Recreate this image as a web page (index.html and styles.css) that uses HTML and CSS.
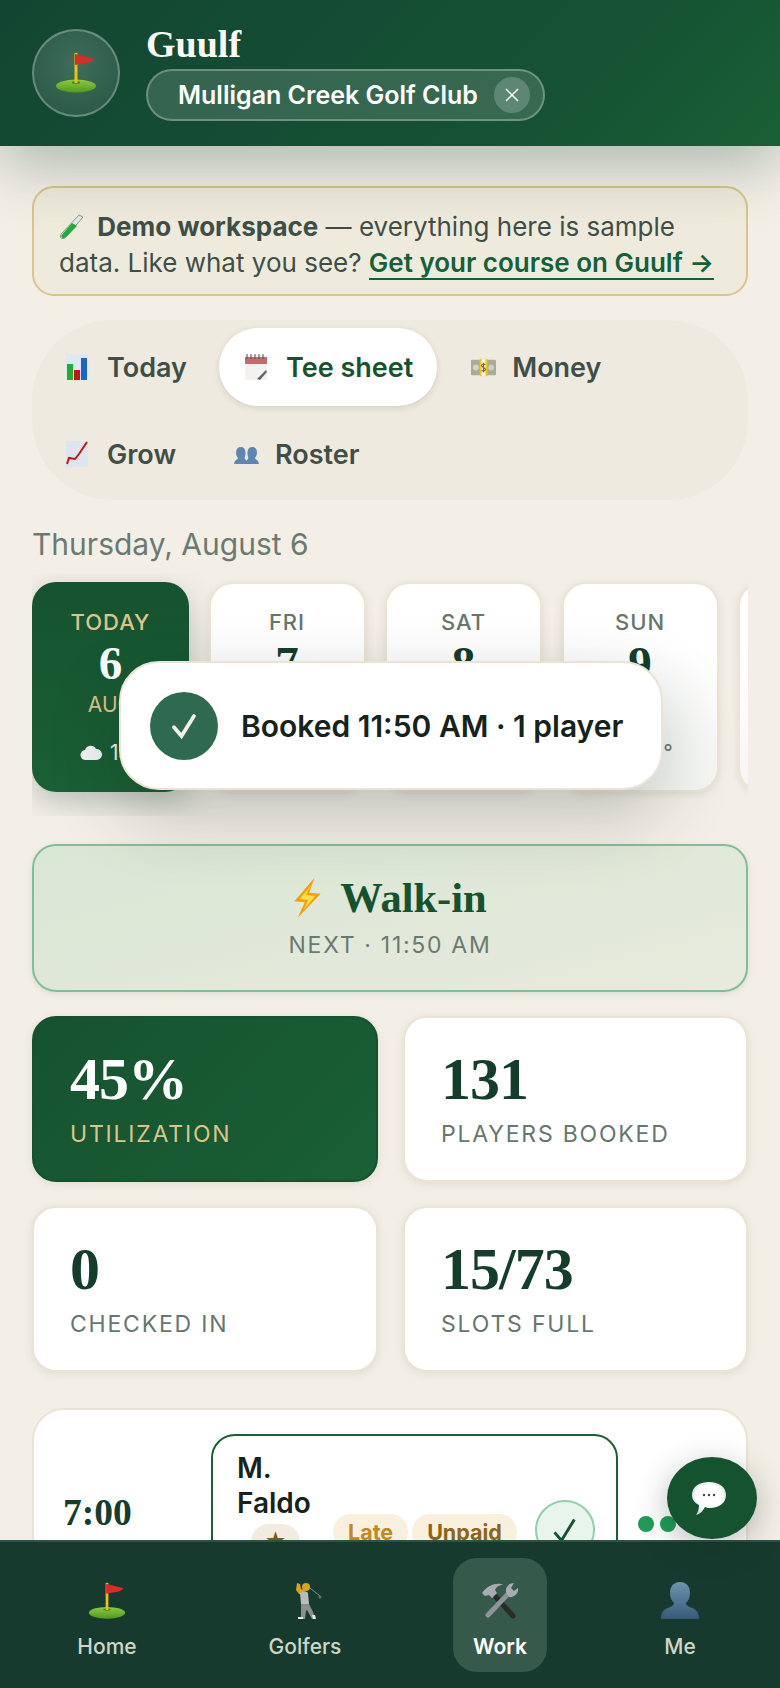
FILE: index.html
```html
<!DOCTYPE html>
<html lang="en">
  <head>
    <meta charset="UTF-8" />
    <meta name="viewport" content="width=device-width, initial-scale=1.0" />
    <title>Guulf</title>
    <link rel="stylesheet" href="styles.css">
  </head>
  <body>
    <svg class="defs" width="0" height="0">
      <defs>
        <linearGradient id="green-fill" x1="0" y1="0" x2="0" y2="1">
          <stop offset="0" stop-color="#8fcb3c" />
          <stop offset="1" stop-color="#4f9a1f" />
        </linearGradient>
        <linearGradient id="bust-fill" x1="0" y1="0" x2="0" y2="1">
          <stop offset="0" stop-color="#6d93ae" />
          <stop offset="1" stop-color="#375a78" />
        </linearGradient>
        <radialGradient id="bubble-fill" cx="0.5" cy="0.45" r="0.6">
          <stop offset="0.6" stop-color="#ffffff" />
          <stop offset="1" stop-color="#cfd2d2" />
        </radialGradient>
        <symbol id="flag" viewBox="0 0 42 42">
          <ellipse cx="21" cy="34" rx="20" ry="6.500" fill="url(#green-fill)" />
          <ellipse cx="21" cy="30.500" rx="4" ry="1.200" fill="#3d7a18" />
          <rect x="19.500" y="1" width="3" height="30" fill="#e8c315" />
          <path d="M20 2l19 5c-2 3-5 4-8 4l-11 2z" fill="#dc2a24" />
        </symbol>
        <symbol id="cloud" viewBox="0 0 22 16">
          <path d="M6 15a5 5 0 0 1-1-10 6 6 0 0 1 11-1 5.500 5.500 0 0 1 1 11z" fill="#f1f3f3" />
        </symbol>
      </defs>
    </svg>

    <header class="topbar">
      <div class="avatar">
        <svg class="avatar-icon"><use href="#flag" /></svg>
      </div>
      <div class="brand">
        <div class="brand-name">Guulf</div>
        <div class="club-chip">
          <span>Mulligan Creek Golf Club</span>
          <span class="chip-close">
            <svg viewBox="0 0 16 16" width="16" height="16"><path d="M2 2l12 12M14 2L2 14" stroke="#fff" stroke-width="1.500" fill="none" /></svg>
          </span>
        </div>
      </div>
    </header>

    <main class="content">
      <div class="demo-banner">
        <svg class="tube" viewBox="0 0 25 26"><path d="M20 2l4 2L7 24c-2 2-4 2-5 1s-1-3 1-5z" fill="#dfe9e4" stroke="#8a9a90" stroke-width="1" /><path d="M13 10l5 3L7 24c-2 1.500-3 1.500-4 .5s-1-2 .5-3.500z" fill="#1fae3a" /></svg>
        <b>Demo workspace</b> — everything here is sample data. Like what you see? <a class="demo-link">Get your course on Guulf →</a>
      </div>

      <nav class="tabs">
        <div class="tab">
          <svg class="tab-icon" viewBox="0 0 22 26"><rect width="22" height="26" fill="#dfe8f0" /><rect x="1" y="10" width="6" height="16" fill="#17b32e" /><rect x="8" y="16" width="6" height="10" fill="#c8140f" /><rect x="15" y="4" width="6" height="22" fill="#1a66c9" /></svg>
          Today
        </div>
        <div class="tab tab-active">
          <svg class="tab-icon" viewBox="0 0 22 26"><rect y="1" width="22" height="25" fill="#f3f2f0" /><rect y="3" width="22" height="7" fill="#c46a6a" /><path d="M2 0v5M6 0v5M10 0v5M14 0v5M18 0v5" stroke="#555" stroke-width="1" /><path d="M12 25l9-9 1 2-7 8z" fill="#666" /></svg>
          Tee sheet
        </div>
        <div class="tab">
          <svg class="tab-icon-wide" viewBox="0 0 26 18"><rect y="1" width="26" height="16" rx="1" fill="#a9ab98" /><circle cx="5" cy="9" r="3" fill="#d5d6c6" /><circle cx="21" cy="9" r="3" fill="#bcd6ba" /><rect x="9" width="8" height="18" fill="#f4c51f" /><rect x="11" width="4" height="18" fill="#fdf6d8" /><path d="M15 6c-1-1-4-1-4 1s4 2 4 4-3 2-4 1M13 4v10" stroke="#8a6412" stroke-width="1.200" fill="none" /></svg>
          Money
        </div>
        <div class="tab">
          <svg class="tab-icon" viewBox="0 0 22 26"><rect width="22" height="26" fill="#dde6ee" /><path d="M1 23l2-6 6 1 4-5 8-12" stroke="#c8140f" stroke-width="2" fill="none" /></svg>
          Grow
        </div>
        <div class="tab">
          <svg class="tab-icon-wide" viewBox="0 0 26 20"><g fill="#5d86b0"><path d="M19 2c3 0 5 2 5 6s-2 5-2 6 4 2 4 6H12c0-4 3-5 3-6s-1-2-1-6 2-6 5-6z" /><path d="M7 2c3 0 5 2 5 6s-1 5-1 6 3 2 3 6H0c0-4 4-5 4-6S2 12 2 8s2-6 5-6z" /></g></svg>
          Roster
        </div>
      </nav>

      <p class="date-label">Thursday, August 6</p>

      <div class="day-strip">
        <div class="day day-today">
          <div class="day-name">TODAY</div>
          <div class="day-num">6</div>
          <div class="day-month">AUG</div>
          <div class="day-temp"><svg class="cloud"><use href="#cloud" /></svg> 19°</div>
        </div>
        <div class="day">
          <div class="day-name">FRI</div>
          <div class="day-num">7</div>
          <div class="day-month">AUG</div>
          <div class="day-temp"><svg class="cloud"><use href="#cloud" /></svg> 21°</div>
        </div>
        <div class="day">
          <div class="day-name">SAT</div>
          <div class="day-num">8</div>
          <div class="day-month">AUG</div>
          <div class="day-temp"><svg class="cloud"><use href="#cloud" /></svg> 22°</div>
        </div>
        <div class="day">
          <div class="day-name">SUN</div>
          <div class="day-num">9</div>
          <div class="day-month">AUG</div>
          <div class="day-temp"><svg class="cloud"><use href="#cloud" /></svg> 20°</div>
        </div>
        <div class="day"></div>
      </div>

      <button class="walkin">
        <span class="walkin-title">
          <svg class="bolt" viewBox="0 0 26 38"><path d="M20 0L1 22l10 1-7 15L26 15l-11-1z" fill="#f59e0b" /><path d="M17 7L6 20l8 1-4 9 11-13-9-1z" fill="#fde047" /></svg>
          Walk-in
        </span>
        <span class="walkin-next">NEXT · 11:50 AM</span>
      </button>

      <div class="stats">
        <div class="stat stat-dark">
          <div class="stat-value">45%</div>
          <div class="stat-label">UTILIZATION</div>
        </div>
        <div class="stat">
          <div class="stat-value">131</div>
          <div class="stat-label">PLAYERS BOOKED</div>
        </div>
        <div class="stat">
          <div class="stat-value">0</div>
          <div class="stat-label">CHECKED IN</div>
        </div>
        <div class="stat">
          <div class="stat-value">15/73</div>
          <div class="stat-label">SLOTS FULL</div>
        </div>
      </div>

      <section class="tee-row">
        <div class="tee-time">7:00</div>
        <div class="booking">
          <div class="booking-who">
            <div class="booking-name">M.<br />Faldo</div>
            <span class="tag tag-star">★</span>
          </div>
          <div class="booking-tags">
            <span class="tag tag-late">Late</span>
            <span class="tag tag-unpaid">Unpaid</span>
            <span class="check-btn">
              <svg viewBox="0 0 24 24" width="28" height="28"><path d="M3 14l6 7L20 3" stroke="#14532d" stroke-width="2.500" fill="none" /></svg>
            </span>
          </div>
        </div>
        <div class="seats">
          <i></i><i></i>
        </div>
      </section>
    </main>

    <div class="toast">
      <span class="toast-check">
        <svg viewBox="0 0 24 24" width="30" height="30"><path d="M4 13l6 7L20 4" stroke="#f5f0e4" stroke-width="3" fill="none" stroke-linecap="round" /></svg>
      </span>
      Booked 11:50 AM · 1 player
    </div>

    <button class="chat-fab">
      <svg viewBox="0 0 34 33" width="34" height="33"><path d="M17 0c10 0 17 5 17 13s-7 13-16 13c-2 0-3 0-5-1-2 4-5 7-9 8 2-3 3-6 3-10C3 21 0 18 0 13 0 5 7 0 17 0z" fill="url(#bubble-fill)" /><circle cx="12" cy="13" r="1.200" fill="#444" /><circle cx="17" cy="13" r="1.200" fill="#444" /><circle cx="22" cy="13" r="1.200" fill="#444" /></svg>
    </button>

    <nav class="bottom-nav">
      <a class="nav-item">
        <svg class="nav-icon"><use href="#flag" /></svg>
        Home
      </a>
      <a class="nav-item">
        <svg class="nav-icon" viewBox="0 0 38 38"><path d="M24 6l10 8" stroke="#8b8f8d" stroke-width="1" /><circle cx="34" cy="15" r="1.500" fill="#6f7371" /><path d="M11 1l3 1 1 5 4 1-1 5-5-1-3-4z" fill="#d9a514" /><circle cx="20" cy="5" r="4" fill="#d9a514" /><path d="M14 11c3-2 7-2 8 0l1 11h-8z" fill="#b8bcba" /><path d="M15 22h8l4 8 2 6-3 1-5-9-1 1-1 8h-4z" fill="#8b8f8d" /><path d="M12 35h5v2h-5zM26 33l3 0 1 4h-3z" fill="#e6e8e6" /></svg>
        Golfers
      </a>
      <a class="nav-item nav-active">
        <svg class="nav-icon" viewBox="0 0 38 38"><path d="M15 15l17 19" stroke="#2a2a2a" stroke-width="5" stroke-linecap="round" /><path d="M1 11C7 2 18 0 22 3c-4 0-7 2-8 5l2 3-5 5-3-3-4 1z" fill="#a9adb3" /><path d="M28 11L7 33" stroke="#8f9399" stroke-width="5" stroke-linecap="round" /><path d="M25 10c-1-5 3-9 8-9l-3 5 3 3 4-3c1 6-5 10-9 9z" fill="#a9adb3" /></svg>
        Work
      </a>
      <a class="nav-item">
        <svg class="nav-icon" viewBox="0 0 38 38"><path d="M19 0c7 0 10 5 10 11 0 5-2 8-4 10 0 2 3 4 6 5 5 2 7 5 7 11H0c0-6 2-9 7-11 3-1 6-3 6-5-2-2-4-5-4-10C9 5 12 0 19 0z" fill="url(#bust-fill)" /></svg>
        Me
      </a>
    </nav>
  </body>
</html>
```

FILE: styles.css
```css
* {
  box-sizing: border-box;
}
html,
body {
  margin: 0;
  height: 1688px;
  overflow: hidden;
}
body {
  position: relative;
  font-family: Inter, "Noto Sans", sans-serif;
  background-color: #f3efe7;
  color: #14231c;
}
.defs {
  position: absolute;
}

/* top bar */
.topbar {
  position: relative;
  z-index: 5;
  display: flex;
  align-items: center;
  gap: 26px;
  height: 146px;
  padding: 0 32px 1px;
  background: linear-gradient(135deg, #134632 0%, #155234 70%, #1a5f35 100%);
  box-shadow: 0 20px 60px rgba(20, 60, 45, 0.3);
}
.avatar {
  display: flex;
  align-items: center;
  justify-content: center;
  width: 88px;
  height: 88px;
  margin-top: 1px;
  border-radius: 50%;
  background: radial-gradient(circle at 50% 40%, #3f6d5b, #275543);
  border: 2px solid rgba(255, 255, 255, 0.28);
}
.avatar-icon {
  width: 42px;
  height: 42px;
}
.brand {
  display: flex;
  flex-direction: column;
  gap: 5px;
}
.brand-name {
  font-family: "Liberation Serif", serif;
  font-size: 38px;
  font-weight: 700;
  line-height: 40px;
  color: #fdfbf4;
}
.club-chip {
  display: flex;
  align-items: center;
  gap: 16px;
  height: 52px;
  padding: 0 13px 0 30px;
  border-radius: 26px;
  background: rgba(255, 255, 255, 0.14);
  border: 2px solid rgba(255, 255, 255, 0.28);
  color: #fff;
  font-size: 25px;
  font-weight: 600;
}
.chip-close {
  display: flex;
  align-items: center;
  justify-content: center;
  width: 36px;
  height: 36px;
  border-radius: 50%;
  background: rgba(255, 255, 255, 0.2);
}

/* page body */
.content {
  padding: 40px 32px 0;
}
.demo-banner {
  padding: 21px 25px 13px;
  border: 2px solid #d8c48c;
  border-radius: 22px;
  background: #efebdc;
  color: #3f4f47;
  font-size: 26px;
  line-height: 36px;
}
.demo-banner b {
  font-weight: 700;
  margin-left: 6px;
}
.tube {
  width: 25px;
  height: 26px;
  vertical-align: -3px;
}
.demo-link {
  color: #14603a;
  font-weight: 600;
  border-bottom: 2px solid #14603a;
}
.tabs {
  display: flex;
  flex-wrap: wrap;
  align-content: flex-start;
  column-gap: 8px;
  row-gap: 9px;
  margin-top: 24px;
  padding: 8px;
  height: 180px;
  border-radius: 80px;
  background: #efeae0;
}
.tab {
  display: flex;
  align-items: center;
  gap: 19px;
  height: 78px;
  padding: 0 24px 0 26px;
  border-radius: 39px;
  font-size: 27px;
  font-weight: 600;
  color: #3f4f47;
}
.tab-active {
  background: #fff;
  color: #14532d;
  box-shadow: 0 2px 6px rgba(60, 50, 30, 0.14);
}
.tab-icon {
  width: 22px;
  height: 26px;
}
.tab-icon-wide {
  width: 25px;
  height: 19px;
  margin-right: -3px;
}
.date-label {
  margin: 26px 0 0;
  font-size: 30px;
  line-height: 36px;
  color: #6b7a70;
}

/* day picker */
.day-strip {
  display: flex;
  gap: 19.500px;
  align-items: flex-start;
  height: 242px;
  margin-top: 12px;
  padding-top: 8px;
  overflow: hidden;
}
.day {
  flex: 0 0 157px;
  height: 210px;
  padding-top: 24px;
  text-align: center;
  background: linear-gradient(180deg, #fff 30%, #f5f6f4);
  border: 2px solid #ebe4d6;
  border-radius: 24px;
  box-shadow: 0 2px 8px rgba(60, 50, 30, 0.1);
}
.day-today {
  background: linear-gradient(180deg, #15532f, #1a5f35);
  border: none;
  box-shadow: 0 10px 30px rgba(20, 60, 45, 0.25);
  padding-top: 26px;
}
.day-name {
  font-size: 22px;
  font-weight: 500;
  line-height: 28px;
  letter-spacing: 1px;
  color: #66776d;
}
.day-today .day-name {
  color: #dcc48a;
}
.day-num {
  font-family: "Liberation Serif", serif;
  font-size: 47px;
  font-weight: 700;
  line-height: 50px;
  margin-top: 2px;
  color: #143d2b;
}
.day-today .day-num {
  color: #fff;
}
.day-month {
  font-size: 21px;
  line-height: 28px;
  margin-top: 3px;
  color: #66776d;
}
.day-today .day-month {
  color: #dcc48a;
}
.day-temp {
  display: flex;
  align-items: center;
  justify-content: center;
  gap: 8px;
  margin-top: 21px;
  font-size: 21px;
  color: #66776d;
}
.day-today .day-temp {
  color: #f3efe7;
}
.cloud {
  width: 22px;
  height: 16px;
}

/* walk-in button */
.walkin {
  display: flex;
  flex-direction: column;
  align-items: center;
  width: 716px;
  height: 148px;
  margin-top: 28px;
  padding: 28px 0 0;
  border: 2px solid #7fbf97;
  border-radius: 24px;
  background: linear-gradient(165deg, #d9e7d5, #e7eadc);
  box-shadow: 0 2px 6px rgba(60, 50, 30, 0.1);
  font-family: inherit;
}
.walkin-title {
  display: flex;
  align-items: center;
  gap: 19px;
  font-family: "Liberation Serif", serif;
  font-size: 42.500px;
  font-weight: 700;
  line-height: 48px;
  color: #14532d;
}
.bolt {
  width: 28px;
  height: 40px;
}
.walkin-next {
  margin-top: 8px;
  font-size: 23px;
  line-height: 30px;
  letter-spacing: 1.700px;
  color: #6b7a70;
}

/* stat cards */
.stats {
  display: grid;
  grid-template-columns: 346px 345px;
  gap: 24px 25px;
  margin-top: 24px;
}
.stat {
  height: 166px;
  padding: 28px 36px 0;
  background: #fff;
  border: 2px solid #ebe4d6;
  border-radius: 24px;
  box-shadow: 0 2px 8px rgba(60, 50, 30, 0.1);
}
.stat-dark {
  background: linear-gradient(135deg, #15532f, #1a5f35);
  border-color: #14532d;
}
.stat-value {
  font-family: "Liberation Serif", serif;
  font-size: 60px;
  font-weight: 700;
  line-height: 66px;
  letter-spacing: -1px;
  color: #143d2b;
}
.stat-dark .stat-value {
  color: #fff;
}
.stat-label {
  margin-top: 7px;
  font-size: 23px;
  line-height: 30px;
  letter-spacing: 1.800px;
  color: #66776d;
}
.stat-dark .stat-label {
  color: #dcc48a;
}

/* first tee sheet row */
.tee-row {
  display: flex;
  align-items: flex-start;
  width: 716px;
  height: 360px;
  margin-top: 36px;
  padding: 24px 0 0 29px;
  background: #fff;
  border: 2px solid #ebe4d6;
  border-radius: 32px;
}
.tee-time {
  width: 148px;
  margin-top: 57px;
  font-family: "Liberation Serif", serif;
  font-size: 37.500px;
  font-weight: 700;
  color: #143d2b;
}
.booking {
  display: flex;
  width: 407px;
  height: 260px;
  padding: 15px 24px;
  border: 2px solid #1a5f35;
  border-radius: 24px;
}
.booking-who {
  flex: 0 0 96px;
}
.booking-name {
  font-size: 28px;
  font-weight: 600;
  line-height: 35px;
}
.booking-tags {
  display: flex;
  align-items: flex-start;
  gap: 4px;
  margin-top: 63px;
}
.tag {
  display: inline-block;
  height: 36px;
  padding: 5px 15px;
  border-radius: 18px;
  font-size: 21.500px;
  font-weight: 700;
  line-height: 26px;
}
.tag-star {
  width: 49px;
  margin: 3px 0 0 14px;
  padding: 4px 0;
  background: #f1ecdf;
  color: #7a5a1c;
  text-align: center;
}
.tag-late {
  background: #f8efdc;
  color: #c4861d;
}
.tag-unpaid {
  background: #f8efdc;
  color: #8a6418;
}
.check-btn {
  display: flex;
  align-items: center;
  justify-content: center;
  flex: 0 0 60px;
  height: 60px;
  margin: -14px 0 0 14px;
  border-radius: 50%;
  border: 2px solid #8fd0aa;
  background: #e8f4ec;
}
.seats {
  display: flex;
  gap: 6px;
  margin: 82px 0 0 20px;
}
.seats i {
  width: 16px;
  height: 16px;
  border-radius: 50%;
  background: #1f9d55;
}

/* overlays */
.toast {
  position: absolute;
  z-index: 8;
  left: 119px;
  top: 661px;
  display: flex;
  align-items: center;
  gap: 23px;
  width: 544px;
  height: 129px;
  padding-left: 29px;
  background: #fff;
  border: 2px solid #ebe4d6;
  border-radius: 40px;
  box-shadow: 0 24px 70px rgba(20, 40, 30, 0.24);
  font-size: 30px;
  font-weight: 600;
  color: #14231c;
}
.toast-check {
  display: flex;
  align-items: center;
  justify-content: center;
  width: 68px;
  height: 68px;
  border-radius: 50%;
  background: #2d6a50;
}
.chat-fab {
  position: absolute;
  z-index: 9;
  left: 667px;
  top: 1457px;
  display: flex;
  align-items: center;
  justify-content: center;
  width: 90px;
  height: 82px;
  padding: 0 6px 0 0;
  border: none;
  border-radius: 50%;
  background: #15532f;
  box-shadow: 0 8px 32px rgba(20, 40, 30, 0.3);
}
.bottom-nav {
  position: absolute;
  z-index: 7;
  left: 0;
  right: 0;
  bottom: 0;
  display: grid;
  grid-template-columns: 214px 182px 208px 152px;
  height: 148px;
  padding: 16px 0;
  background: #163b2e;
  border-top: 2px solid #2c5344;
}
.nav-item {
  display: flex;
  flex-direction: column;
  align-items: center;
  gap: 14px;
  padding-top: 24px;
  font-size: 21px;
  font-weight: 500;
  line-height: 25px;
  color: #cfd6c9;
}
.nav-active {
  justify-self: center;
  width: 94px;
  border-radius: 24px;
  background: #355a4c;
  color: #fff;
  font-weight: 600;
}
.nav-icon {
  width: 38px;
  height: 38px;
}
```
